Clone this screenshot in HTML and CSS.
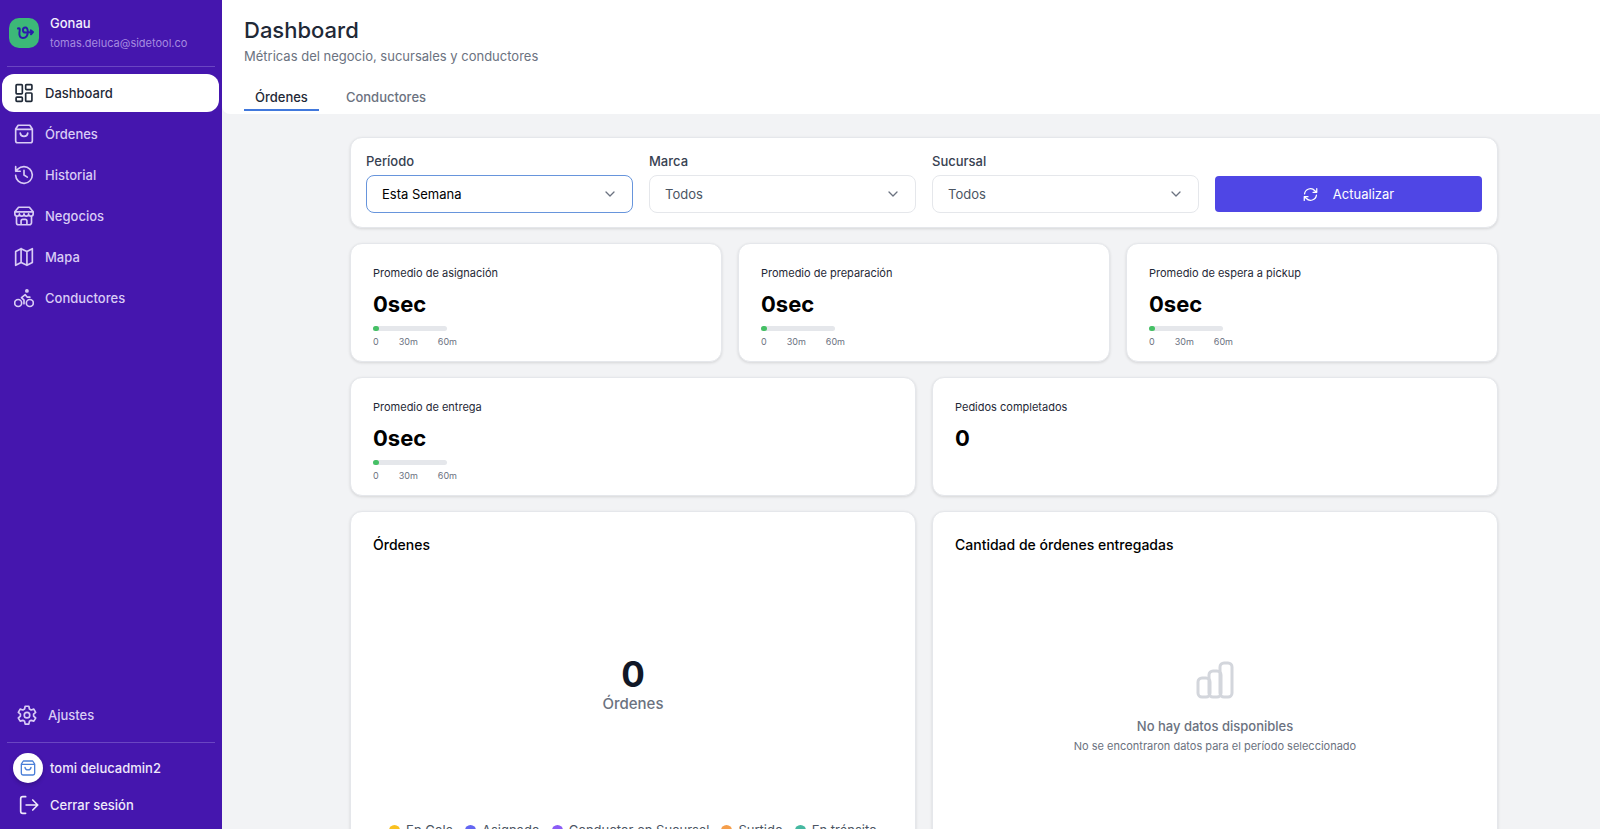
FILE: index.html
```html
<!DOCTYPE html>
<html lang="es">
  <head>
    <meta charset="UTF-8" />
    <meta name="viewport" content="width=device-width, initial-scale=1.0" />
    <title>Dashboard</title>
    <link rel="stylesheet" href="styles.css">
  </head>

  <body>
    <aside class="sidebar">
      <div class="brand">
        <svg class="brand-logo" viewBox="0 0 30 30">
          <rect width="30" height="30" rx="10" fill="#3cb878" />
          <path d="M9 10.500c1.500-.8 2 0 1.700 2l-.3 2.500c-.3 3 1 5 3.500 5 3.200 0 4.800-2.200 4.900-6 0-3-.8-4.600-2.500-4.600-1.500 0-2.400 1-2.400 2.500s1 2.600 2.600 2.600c2 0 4-.3 7-.6M21.700 12.300l2.300 1.800-2 2.100" />
        </svg>
        <div class="brand-text">
          <span class="brand-name">Gonau</span>
          <span class="brand-email">tomas.deluca@sidetool.co</span>
        </div>
      </div>

      <nav class="nav">
        <a class="nav-link active" href="#">
          <svg class="icon" viewBox="0 0 24 24">
            <rect x="2.500" y="2" width="7.500" height="11" rx="1" />
            <rect x="14" y="2" width="7.500" height="6" rx="1" />
            <rect x="14" y="12" width="7.500" height="10" rx="1" />
            <rect x="2.500" y="17" width="7.500" height="5" rx="1" />
          </svg>
          Dashboard
        </a>
        <a class="nav-link" href="#">
          <svg class="icon" viewBox="0 0 24 24">
            <path d="M5 1.500h14l3 4.500v14a2.500 2.500 0 0 1-2.500 2.500h-15A2.500 2.500 0 0 1 2 20V6zM2 6.500h20M7.500 11c.5 5 8.500 5 9 0" />
          </svg>
          Órdenes
        </a>
        <a class="nav-link" href="#">
          <svg class="icon" viewBox="0 0 24 24">
            <path d="M2 12.500A10 10 0 1 0 12 2 10.700 10.700 0 0 0 4.500 5L2 7.500M2 2v5.500h5.500M12 6.500V12l4 2.500" />
          </svg>
          Historial
        </a>
        <a class="nav-link" href="#">
          <svg class="icon" viewBox="0 0 24 24">
            <path d="M5.500 1.500h13L23 7H1zM1 7v2.500c0 3.500 5.500 3.500 5.500 0 0 3.500 5.500 3.500 5.500 0 0 3.500 5.500 3.500 5.500 0 0 3.500 5.500 3.500 5.500 0V7M3 12.500V20a2.500 2.500 0 0 0 2.500 2.500h13A2.500 2.500 0 0 0 21 20v-7.500M8.500 22.500V18a2 2 0 0 1 2-2h3a2 2 0 0 1 2 2v4.500" />
          </svg>
          Negocios
        </a>
        <a class="nav-link" href="#">
          <svg class="icon" viewBox="0 0 24 24">
            <path d="M2 5.500 8.500 2l7 3.500L22 2v16.500L15.500 22l-7-3.500L2 22zM8.500 2v16.500M15.500 5.500V22" />
          </svg>
          Mapa
        </a>
        <a class="nav-link" href="#">
          <svg class="icon" viewBox="0 0 24 24">
            <circle cx="5" cy="18" r="4.200" />
            <circle cx="19" cy="18" r="4.200" />
            <circle cx="15.500" cy="3.500" r="1.300" fill="currentColor" />
            <path d="M12 19v-4.500l-3-3 4.500-3.500 2.500 3h3" />
          </svg>
          Conductores
        </a>
      </nav>

      <div class="sidebar-bottom">
        <a class="nav-link settings" href="#">
          <svg class="icon" viewBox="0 0 24 24">
            <path d="M9.800 1.500h4.400l.7 3.300 2.100 1.200 3.200-1 2.200 3.800-2.500 2.200v2.400l2.500 2.200-2.200 3.800-3.200-1-2.100 1.200-.7 3.300H9.800l-.7-3.300L7 18.400l-3.200 1-2.200-3.800 2.500-2.200V11L1.600 8.800 3.800 5 7 6l2.100-1.200z" />
            <circle cx="12" cy="12.200" r="3.300" />
          </svg>
          Ajustes
        </a>
        <div class="account">
          <div class="account-row">
            <span class="avatar">
              <svg class="avatar-icon" viewBox="0 0 24 24">
                <path d="M5 1.500h14l3 4.500v14a2.500 2.500 0 0 1-2.500 2.500h-15A2.500 2.500 0 0 1 2 20V6zM2 6.500h20M7.500 11c.5 5 8.500 5 9 0" />
              </svg>
            </span>
            tomi delucadmin2
          </div>
          <button class="account-row logout">
            <svg class="icon" viewBox="0 0 24 24">
              <path d="M8 2H4.500A2.500 2.500 0 0 0 2 4.500v15A2.500 2.500 0 0 0 4.500 22H8M8.500 12H22M16.500 6l6 6-6 6" />
            </svg>
            Cerrar sesión
          </button>
        </div>
      </div>
    </aside>

    <main class="main">
      <header class="header">
        <h1 class="title">Dashboard</h1>
        <p class="subtitle">Métricas del negocio, sucursales y conductores</p>
        <nav class="tabs">
          <a class="tab active" href="#">Órdenes</a>
          <a class="tab" href="#">Conductores</a>
        </nav>
      </header>

      <div class="content">
        <form class="card filters">
          <div class="field">
            <label class="field-label" for="periodo">Período</label>
            <div class="select-wrap">
              <select class="select selected" id="periodo">
                <option>Esta Semana</option>
              </select>
              <svg class="chevron" viewBox="0 0 14 14"><path d="M3 5l4 4 4-4" /></svg>
            </div>
          </div>
          <div class="field">
            <label class="field-label" for="marca">Marca</label>
            <div class="select-wrap">
              <select class="select" id="marca">
                <option>Todos</option>
              </select>
              <svg class="chevron" viewBox="0 0 14 14"><path d="M3 5l4 4 4-4" /></svg>
            </div>
          </div>
          <div class="field">
            <label class="field-label" for="sucursal">Sucursal</label>
            <div class="select-wrap">
              <select class="select" id="sucursal">
                <option>Todos</option>
              </select>
              <svg class="chevron" viewBox="0 0 14 14"><path d="M3 5l4 4 4-4" /></svg>
            </div>
          </div>
          <button class="update-button" type="button">
            <svg class="update-icon" viewBox="0 0 24 24">
              <path d="M2.500 11A9.500 9.500 0 0 1 19 6l3 2.500M22 2.500v6h-6M21.500 13A9.500 9.500 0 0 1 5 18l-3-2.500M2 21.500v-6h6" />
            </svg>
            Actualizar
          </button>
        </form>

        <section class="row three">
          <div class="card metric">
            <h2 class="metric-label">Promedio de asignación</h2>
            <p class="metric-value">0sec</p>
            <div class="bar"><div class="bar-fill"></div></div>
            <div class="scale"><span>0</span><span>30m</span><span>60m</span></div>
          </div>
          <div class="card metric">
            <h2 class="metric-label">Promedio de preparación</h2>
            <p class="metric-value">0sec</p>
            <div class="bar"><div class="bar-fill"></div></div>
            <div class="scale"><span>0</span><span>30m</span><span>60m</span></div>
          </div>
          <div class="card metric">
            <h2 class="metric-label">Promedio de espera a pickup</h2>
            <p class="metric-value">0sec</p>
            <div class="bar"><div class="bar-fill"></div></div>
            <div class="scale"><span>0</span><span>30m</span><span>60m</span></div>
          </div>
        </section>

        <section class="row two">
          <div class="card metric">
            <h2 class="metric-label">Promedio de entrega</h2>
            <p class="metric-value">0sec</p>
            <div class="bar"><div class="bar-fill"></div></div>
            <div class="scale"><span>0</span><span>30m</span><span>60m</span></div>
          </div>
          <div class="card metric">
            <h2 class="metric-label">Pedidos completados</h2>
            <p class="metric-value">0</p>
          </div>
        </section>

        <section class="row two">
          <div class="card chart">
            <h2 class="chart-title">Órdenes</h2>
            <div class="chart-body">
              <span class="total">0</span>
              <span class="total-label">Órdenes</span>
            </div>
            <ul class="legend">
              <li class="legend-item"><span class="dot yellow"></span>En Cola</li>
              <li class="legend-item"><span class="dot blue"></span>Asignado</li>
              <li class="legend-item"><span class="dot purple"></span>Conductor en Sucursal</li>
              <li class="legend-item"><span class="dot orange"></span>Surtido</li>
              <li class="legend-item"><span class="dot green"></span>En tránsito</li>
            </ul>
          </div>
          <div class="card chart">
            <h2 class="chart-title">Cantidad de órdenes entregadas</h2>
            <div class="chart-body empty">
              <svg class="empty-icon" viewBox="0 0 38 38">
                <rect x="2" y="17" width="12" height="19" rx="4" />
                <rect x="13" y="10" width="12" height="26" rx="4" />
                <rect x="24" y="2" width="12" height="34" rx="4" />
              </svg>
              <p class="empty-title">No hay datos disponibles</p>
              <p class="empty-text">No se encontraron datos para el período seleccionado</p>
            </div>
          </div>
        </section>
      </div>
    </main>
  </body>
</html>
```
FILE: styles.css
```css
* {
  box-sizing: border-box;
}

body {
  margin: 0;
  height: 100vh;
  display: flex;
  overflow: hidden;
  font-family: Inter, "Liberation Sans", sans-serif;
  font-size: 13px;
  color: #1f2937;
  background-color: #f2f3f5;
}

h1,
h2,
p,
ul {
  margin: 0;
  padding: 0;
}

a {
  color: inherit;
  text-decoration: none;
}

svg {
  fill: none;
  stroke: currentColor;
  stroke-width: 2;
  stroke-linecap: round;
  stroke-linejoin: round;
  flex-shrink: 0;
}

/* Sidebar */
.sidebar {
  width: 222px;
  flex-shrink: 0;
  display: flex;
  flex-direction: column;
  background-color: #4516ae;
  color: #d9ccf5;
  font-weight: 500;
}

.brand {
  display: flex;
  align-items: center;
  gap: 11px;
  height: 67px;
  margin: 0 7px;
  padding: 0 2px;
  border-bottom: 1px solid #6a45c2;
}

.brand-logo {
  width: 30px;
  height: 30px;
  color: #2a1bab;
}

.brand-logo rect {
  stroke: none;
}

.brand-text {
  display: flex;
  flex-direction: column;
}

.brand-name {
  line-height: 20px;
  color: #f3effc;
}

.brand-email {
  font-size: 11px;
  font-weight: 400;
  line-height: 20px;
  color: #a68be0;
}

.nav {
  display: flex;
  flex-direction: column;
  gap: 3px;
  padding: 7px 3px 0 2px;
}

.nav-link {
  display: flex;
  align-items: center;
  gap: 11px;
  height: 38px;
  padding: 0 12px;
  border-radius: 12px;
}

.nav-link.active {
  background-color: white;
  color: #1f2937;
}

.icon {
  width: 20px;
  height: 20px;
}

.sidebar-bottom {
  margin-top: auto;
}

.settings {
  margin: 0 5px 8px;
}

.account {
  display: flex;
  flex-direction: column;
  gap: 3px;
  margin: 0 7px;
  padding: 8px 6px 7px;
  border-top: 1px solid #6a45c2;
}

.account-row {
  display: flex;
  align-items: center;
  gap: 7px;
  height: 34px;
  color: #efe9fb;
}

.avatar {
  display: flex;
  align-items: center;
  justify-content: center;
  width: 30px;
  height: 30px;
  border-radius: 50%;
  background-color: white;
  color: #4a7fd8;
  box-shadow: 0 2px 4px rgba(0, 0, 0, 0.2);
}

.avatar-icon {
  width: 16px;
  height: 16px;
}

.logout {
  gap: 11px;
  padding: 0 6px;
  border: none;
  background: none;
  font: inherit;
  cursor: pointer;
}

/* Header */
.main {
  flex: 1;
  min-width: 0;
  overflow-y: auto;
  scrollbar-width: none;
}

.header {
  padding: 14px 22px 3px;
  background-color: white;
  border-bottom-left-radius: 8px;
}

.title {
  font-size: 22px;
  font-weight: 500;
  line-height: 32px;
}

.subtitle {
  line-height: 20px;
  color: #6b7280;
}

.tabs {
  display: flex;
  gap: 16px;
  margin-top: 17px;
}

.tab {
  padding: 5px 11px 2px;
  line-height: 19px;
  font-weight: 500;
  color: #6b7280;
  border-bottom: 2px solid transparent;
}

.tab.active {
  color: #1f2937;
  border-bottom-color: #4178dc;
}

/* Content */
.content {
  display: flex;
  flex-direction: column;
  gap: 15px;
  box-sizing: content-box;
  max-width: 1148px;
  margin: 0 auto;
  padding: 23px 0 24px 26px;
}

.card {
  background-color: white;
  border: 1px solid #e5e7eb;
  border-radius: 12px;
  box-shadow: 0 1px 3px rgba(0, 0, 0, 0.12);
}

.filters {
  display: grid;
  grid-template-columns: repeat(4, 1fr);
  gap: 16px;
  align-items: end;
  padding: 14px 15px;
}

.field {
  display: flex;
  flex-direction: column;
  gap: 5px;
}

.field-label {
  line-height: 18px;
  font-weight: 500;
  color: #374151;
}

.select-wrap {
  position: relative;
}

.select {
  display: block;
  width: 100%;
  height: 38px;
  padding: 0 15px;
  appearance: none;
  border: 1px solid #e5e7eb;
  border-radius: 8px;
  background-color: white;
  font: inherit;
  color: #4b5563;
}

.select.selected {
  border-color: #6795dc;
  color: black;
}

.chevron {
  position: absolute;
  right: 16px;
  top: 12px;
  width: 14px;
  height: 14px;
  color: #6b7280;
  stroke-width: 1.3;
  pointer-events: none;
}

.update-button {
  display: flex;
  align-items: center;
  justify-content: center;
  gap: 15px;
  height: 36px;
  margin-bottom: 1px;
  border: none;
  border-radius: 4px;
  background-color: #4f46e5;
  color: white;
  font: inherit;
  cursor: pointer;
}

.update-icon {
  width: 15px;
  height: 15px;
}

.row {
  display: grid;
  gap: 16px;
}

.three {
  grid-template-columns: repeat(3, 1fr);
}

.two {
  grid-template-columns: repeat(2, 1fr);
}

.metric {
  padding: 22px 22px 12px;
}

.metric-label {
  font-size: 11px;
  font-weight: 400;
  line-height: 14px;
  color: #1f2937;
}

.metric-value {
  margin-top: 8px;
  font-size: 22px;
  font-weight: 700;
  line-height: 32px;
  color: black;
}

.bar {
  width: 74px;
  height: 5px;
  margin-top: 6px;
  border-radius: 3px;
  background-color: #e5e7eb;
}

.bar-fill {
  width: 6px;
  height: 5px;
  border-radius: 3px;
  background-color: #45c065;
}

.scale {
  display: flex;
  gap: 20px;
  margin-top: 4px;
  font-size: 9px;
  line-height: 14px;
  color: #6b7280;
}

.chart {
  display: flex;
  flex-direction: column;
  padding: 22px;
}

.chart-title {
  font-size: 14px;
  font-weight: 500;
  line-height: 22px;
  color: black;
}

.chart-body {
  display: flex;
  flex-direction: column;
  align-items: center;
  justify-content: center;
  height: 265px;
  padding-bottom: 8px;
}

.chart-body.empty {
  height: 305px;
  padding-bottom: 0;
}

.total {
  font-size: 35px;
  font-weight: 700;
  line-height: 38px;
  color: #111827;
}

.total-label {
  font-size: 15px;
  font-weight: 500;
  line-height: 22px;
  color: #6b7280;
}

.legend {
  display: flex;
  justify-content: center;
  gap: 12px;
  list-style: none;
  color: #4b5563;
}

.legend-item {
  display: flex;
  align-items: center;
  gap: 6px;
  line-height: 18px;
}

.dot {
  width: 11px;
  height: 11px;
  border-radius: 50%;
}

.yellow {
  background-color: #f9c120;
}

.blue {
  background-color: #6366f1;
}

.purple {
  background-color: #8b5cf6;
}

.orange {
  background-color: #f59e4b;
}

.green {
  background-color: #45b8a0;
}

.empty-icon {
  width: 38px;
  height: 38px;
  color: #d3d6dc;
  stroke-width: 3;
  margin-bottom: 17px;
}

.empty-title {
  font-weight: 500;
  line-height: 20px;
  color: #6b7280;
}

.empty-text {
  font-size: 11px;
  line-height: 20px;
  color: #6b7280;
}
```
